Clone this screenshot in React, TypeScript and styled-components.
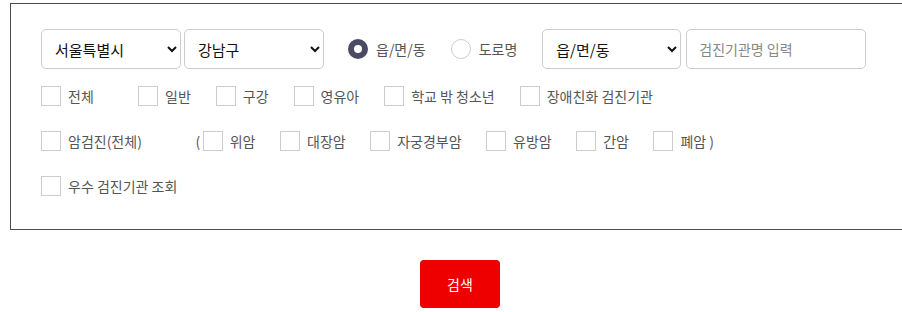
import React from 'react';
import styled, { createGlobalStyle } from 'styled-components';

const GlobalStyle = createGlobalStyle`
  body {
    margin: 0;
    background: #fff;
    font-family: "Noto Sans CJK KR", "Noto Sans", sans-serif;
  }
`;

const Page = styled.div`
  width: 900px;
  margin: 3px 0 0 10px;
`;

const SearchPanel = styled.div`
  border: 1px solid #4a4a58;
  padding: 25px 30px 33px;
  display: flex;
  flex-direction: column;
`;

const Row = styled.div<{ $top?: number; $gap?: number }>`
  display: flex;
  align-items: center;
  margin-top: ${p => p.$top || 0}px;
  column-gap: ${p => (p.$gap === undefined ? 22 : p.$gap)}px;
`;

const Select = styled.select<{ $width: number }>`
  width: ${p => p.$width}px;
  height: 40px;
  border: 1px solid #ccc;
  border-radius: 5px;
  background: #fff;
  padding: 0 8px 0 9px;
  font-family: inherit;
  font-size: 15px;
  color: #111;
`;

const RadioGroup = styled.div`
  display: flex;
  align-items: center;
  margin: 0 -3px 0 21px;
`;

const RadioItem = styled.label`
  display: flex;
  align-items: center;
  gap: 8px;
  margin-right: 25px;
  font-size: 14px;
  color: #555;
`;

const Radio = styled.input.attrs({ type: 'radio' })`
  appearance: none;
  margin: 0;
  width: 20px;
  height: 20px;
  border-radius: 50%;
  border: 1px solid #ccc;
  background: #fff;

  &:checked {
    border: 6px solid #4a4a62;
  }
`;

const TextInput = styled.input`
  width: 180px;
  height: 40px;
  box-sizing: border-box;
  border: 1px solid #ccc;
  border-radius: 5px;
  padding: 0 12px;
  font-family: inherit;
  font-size: 14px;
  margin-left: 2px;

  &::placeholder {
    color: #888;
  }
`;

const CheckItem = styled.label<{ $minWidth?: number }>`
  display: flex;
  align-items: center;
  gap: 7px;
  min-width: ${p => p.$minWidth || 0}px;
  font-size: 14px;
  color: #555;
  line-height: 20px;
`;

const Checkbox = styled.input.attrs({ type: 'checkbox' })`
  appearance: none;
  margin: 0;
  width: 20px;
  height: 20px;
  border: 1px solid #ccc;
  background: #fff;
  flex-shrink: 0;
`;

const Paren = styled.span`
  font-size: 14px;
  color: #555;
  margin-right: -22px;
`;

const ButtonBar = styled.div`
  display: flex;
  justify-content: center;
  margin-top: 30px;
`;

const SearchButton = styled.button`
  width: 80px;
  height: 48px;
  border: none;
  border-radius: 4px;
  background: #ee0000;
  color: #fff;
  font-family: inherit;
  font-size: 14px;
`;

const serviceTypes = ['일반', '구강', '영유아', '학교 밖 청소년', '장애친화 검진기관'];
const cancerTypes = ['위암', '대장암', '자궁경부암', '유방암', '간암'];

const App = () => {
  return (
    <>
      <GlobalStyle />
      <Page>
        <SearchPanel>
          <Row $gap={3}>
            <Select $width={140} defaultValue="서울특별시">
              <option>서울특별시</option>
            </Select>
            <Select $width={140} defaultValue="강남구">
              <option>강남구</option>
            </Select>
            <RadioGroup>
              <RadioItem>
                <Radio name="addr" defaultChecked />
                읍/면/동
              </RadioItem>
              <RadioItem>
                <Radio name="addr" />
                도로명
              </RadioItem>
            </RadioGroup>
            <Select $width={139} defaultValue="읍/면/동">
              <option>읍/면/동</option>
            </Select>
            <TextInput placeholder="검진기관명 입력" />
          </Row>
          <Row $top={17} $gap={25}>
            <CheckItem $minWidth={72}>
              <Checkbox />
              전체
            </CheckItem>
            {serviceTypes.map(item => (
              <CheckItem key={item}>
                <Checkbox />
                {item}
              </CheckItem>
            ))}
          </Row>
          <Row $top={25} $gap={24.5}>
            <CheckItem $minWidth={130}>
              <Checkbox />
              암검진(전체)
            </CheckItem>
            <Paren>(</Paren>
            {cancerTypes.map(item => (
              <CheckItem key={item}>
                <Checkbox />
                {item}
              </CheckItem>
            ))}
            <CheckItem>
              <Checkbox />
              폐암 )
            </CheckItem>
          </Row>
          <Row $top={25}>
            <CheckItem>
              <Checkbox />
              우수 검진기관 조회
            </CheckItem>
          </Row>
        </SearchPanel>
        <ButtonBar>
          <SearchButton>검색</SearchButton>
        </ButtonBar>
      </Page>
    </>
  );
};

export default App;
